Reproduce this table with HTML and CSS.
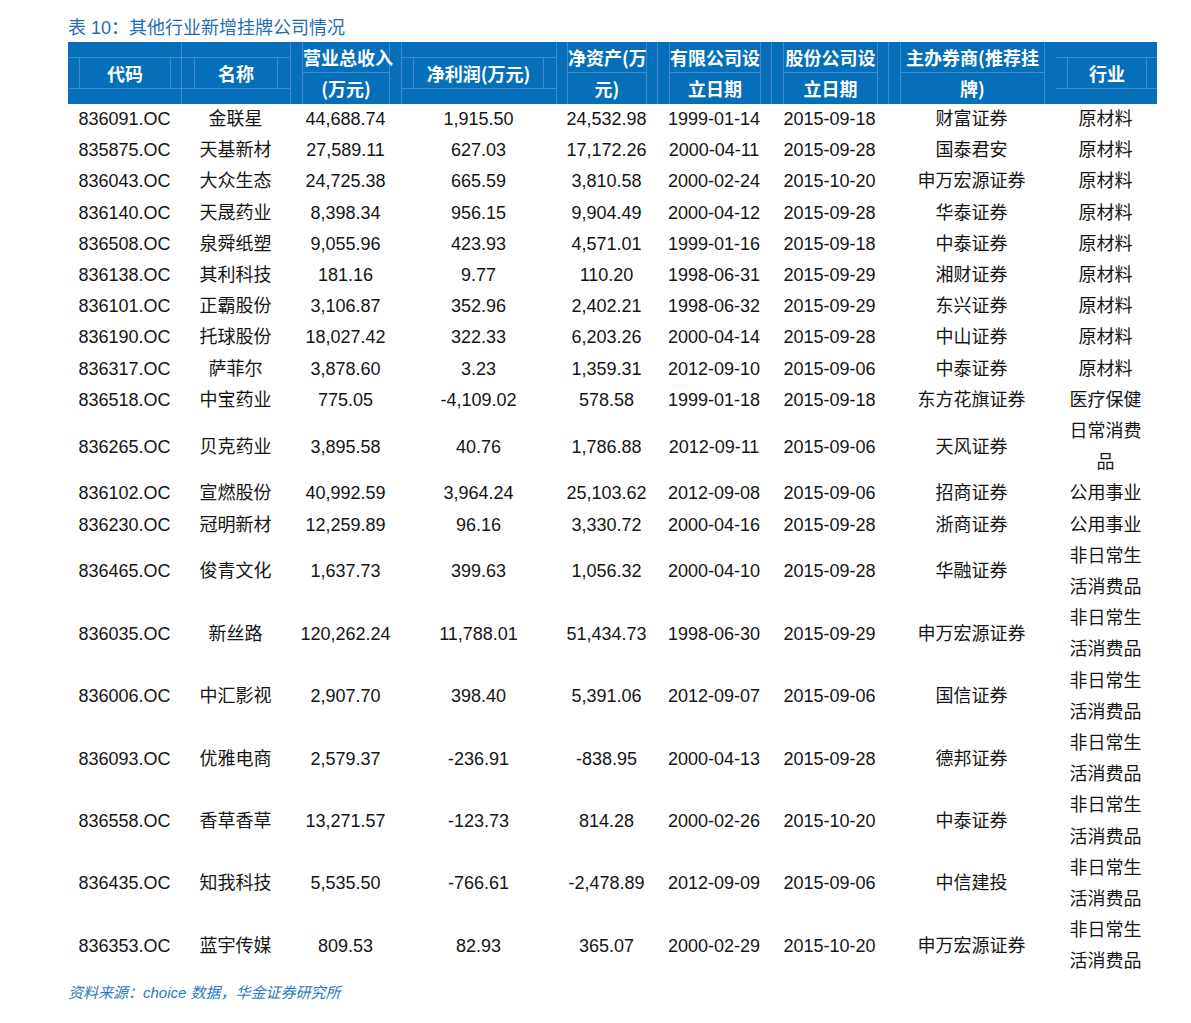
FILE: index.html
```html
<!DOCTYPE html>
<html lang="zh-CN">
<head>
<meta charset="utf-8">
<title>表 10：其他行业新增挂牌公司情况</title>
<link rel="stylesheet" href="styles.css">
</head>
<body>
<div class="page">
  <div class="title">表 10：其他行业新增挂牌公司情况</div>
  <table class="tbl">
    <colgroup>
      <col class="w-code"><col class="w-name"><col class="w-rev"><col class="w-np"><col class="w-na"><col class="w-d1"><col class="w-d2"><col class="w-br"><col class="w-ind">
    </colgroup>
    <thead>
      <tr>
        <th><div class="hc first"><div class="sbox"><div class="sin in-code">代码</div></div></div></th>
        <th><div class="hc"><div class="sbox"><div class="sin in-name">名称</div></div></div></th>
        <th><div class="hc pad-rev"><div class="tbox"><div class="l1">营业总收入</div><div class="l2">(万元)</div></div></div></th>
        <th><div class="hc"><div class="sbox"><div class="sin in-np">净利润(万元)</div></div></div></th>
        <th><div class="hc pad-na"><div class="tbox"><div class="l1">净资产(万</div><div class="l2">元)</div></div></div></th>
        <th><div class="hc pad-d"><div class="tbox"><div class="l1">有限公司设</div><div class="l2">立日期</div></div></div></th>
        <th><div class="hc pad-d"><div class="tbox"><div class="l1">股份公司设</div><div class="l2">立日期</div></div></div></th>
        <th><div class="hc pad-br"><div class="tbox"><div class="l1">主办券商(推荐挂</div><div class="l2">牌)</div></div></div></th>
        <th><div class="hc pad-br"><div class="sbox"><div class="sin in-ind">行业</div></div></div></th>
      </tr>
    </thead>
    <tbody>
      <tr><td>836091.OC</td><td>金联星</td><td>44,688.74</td><td>1,915.50</td><td>24,532.98</td><td>1999-01-14</td><td>2015-09-18</td><td class="br">财富证券</td><td class="ind">原材料</td></tr>
      <tr><td>835875.OC</td><td>天基新材</td><td>27,589.11</td><td>627.03</td><td>17,172.26</td><td>2000-04-11</td><td>2015-09-28</td><td class="br">国泰君安</td><td class="ind">原材料</td></tr>
      <tr><td>836043.OC</td><td>大众生态</td><td>24,725.38</td><td>665.59</td><td>3,810.58</td><td>2000-02-24</td><td>2015-10-20</td><td class="br">申万宏源证券</td><td class="ind">原材料</td></tr>
      <tr><td>836140.OC</td><td>天晟药业</td><td>8,398.34</td><td>956.15</td><td>9,904.49</td><td>2000-04-12</td><td>2015-09-28</td><td class="br">华泰证券</td><td class="ind">原材料</td></tr>
      <tr><td>836508.OC</td><td>泉舜纸塑</td><td>9,055.96</td><td>423.93</td><td>4,571.01</td><td>1999-01-16</td><td>2015-09-18</td><td class="br">中泰证券</td><td class="ind">原材料</td></tr>
      <tr><td>836138.OC</td><td>其利科技</td><td>181.16</td><td>9.77</td><td>110.20</td><td>1998-06-31</td><td>2015-09-29</td><td class="br">湘财证券</td><td class="ind">原材料</td></tr>
      <tr><td>836101.OC</td><td>正霸股份</td><td>3,106.87</td><td>352.96</td><td>2,402.21</td><td>1998-06-32</td><td>2015-09-29</td><td class="br">东兴证券</td><td class="ind">原材料</td></tr>
      <tr><td>836190.OC</td><td>托球股份</td><td>18,027.42</td><td>322.33</td><td>6,203.26</td><td>2000-04-14</td><td>2015-09-28</td><td class="br">中山证券</td><td class="ind">原材料</td></tr>
      <tr><td>836317.OC</td><td>萨菲尔</td><td>3,878.60</td><td>3.23</td><td>1,359.31</td><td>2012-09-10</td><td>2015-09-06</td><td class="br">中泰证券</td><td class="ind">原材料</td></tr>
      <tr><td>836518.OC</td><td>中宝药业</td><td>775.05</td><td>-4,109.02</td><td>578.58</td><td>1999-01-18</td><td>2015-09-18</td><td class="br">东方花旗证券</td><td class="ind">医疗保健</td></tr>
      <tr><td>836265.OC</td><td>贝克药业</td><td>3,895.58</td><td>40.76</td><td>1,786.88</td><td>2012-09-11</td><td>2015-09-06</td><td class="br">天风证券</td><td class="ind">日常消费品</td></tr>
      <tr><td>836102.OC</td><td>宣燃股份</td><td>40,992.59</td><td>3,964.24</td><td>25,103.62</td><td>2012-09-08</td><td>2015-09-06</td><td class="br">招商证券</td><td class="ind">公用事业</td></tr>
      <tr><td>836230.OC</td><td>冠明新材</td><td>12,259.89</td><td>96.16</td><td>3,330.72</td><td>2000-04-16</td><td>2015-09-28</td><td class="br">浙商证券</td><td class="ind">公用事业</td></tr>
      <tr><td>836465.OC</td><td>俊青文化</td><td>1,637.73</td><td>399.63</td><td>1,056.32</td><td>2000-04-10</td><td>2015-09-28</td><td class="br">华融证券</td><td class="ind">非日常生活消费品</td></tr>
      <tr><td>836035.OC</td><td>新丝路</td><td>120,262.24</td><td>11,788.01</td><td>51,434.73</td><td>1998-06-30</td><td>2015-09-29</td><td class="br">申万宏源证券</td><td class="ind">非日常生活消费品</td></tr>
      <tr><td>836006.OC</td><td>中汇影视</td><td>2,907.70</td><td>398.40</td><td>5,391.06</td><td>2012-09-07</td><td>2015-09-06</td><td class="br">国信证券</td><td class="ind">非日常生活消费品</td></tr>
      <tr><td>836093.OC</td><td>优雅电商</td><td>2,579.37</td><td>-236.91</td><td>-838.95</td><td>2000-04-13</td><td>2015-09-28</td><td class="br">德邦证券</td><td class="ind">非日常生活消费品</td></tr>
      <tr><td>836558.OC</td><td>香草香草</td><td>13,271.57</td><td>-123.73</td><td>814.28</td><td>2000-02-26</td><td>2015-10-20</td><td class="br">中泰证券</td><td class="ind">非日常生活消费品</td></tr>
      <tr><td>836435.OC</td><td>知我科技</td><td>5,535.50</td><td>-766.61</td><td>-2,478.89</td><td>2012-09-09</td><td>2015-09-06</td><td class="br">中信建投</td><td class="ind">非日常生活消费品</td></tr>
      <tr><td>836353.OC</td><td>蓝宇传媒</td><td>809.53</td><td>82.93</td><td>365.07</td><td>2000-02-29</td><td>2015-10-20</td><td class="br">申万宏源证券</td><td class="ind">非日常生活消费品</td></tr>
    </tbody>
  </table>
  <div class="source">资料来源：choice 数据，华金证券研究所</div>
</div>
</body>
</html>
```

FILE: styles.css
```css
html, body {
  margin: 0;
  padding: 0;
  background: #ffffff;
}

.page {
  padding: 16px 0 0 68px;
  font-family: "Liberation Sans", "Noto Sans CJK SC", sans-serif;
}

.title {
  font-size: 18px;
  line-height: 24px;
  height: 24px;
  color: #1f6db4;
  margin-bottom: 2px;
}

.tbl {
  border-collapse: collapse;
  border-spacing: 0;
  table-layout: fixed;
  width: 1088px;
}

.w-code { width: 113px; }
.w-name { width: 109px; }
.w-rev  { width: 111px; }
.w-np   { width: 155px; }
.w-na   { width: 101px; }
.w-d1   { width: 114px; }
.w-d2   { width: 117px; }
.w-br   { width: 156px; }
.w-ind  { width: 113px; }

/* ---------- header ---------- */
.tbl thead th {
  padding: 0;
  background: #066fba;
  color: #ffffff;
  font-family: "Noto Sans CJK SC", "Liberation Sans", sans-serif;
  font-weight: 700;
  font-size: 18px;
  vertical-align: top;
}

.hc {
  display: flow-root;
  height: 62px;
  box-sizing: border-box;
  border-left: 1px solid #3f8ccc;
}
.hc.first { border-left-color: transparent; }

.pad-rev { padding: 0 11px; }
.pad-na  { padding: 0 10px; }
.pad-d   { padding: 0 10px 0 11px; }
.pad-br  { padding: 0 0 0 11px; }

/* single-line header cell: boxed band in the middle */
.sbox {
  margin-top: 15px;
  height: 32px;
  box-sizing: border-box;
  border-top: 1px solid #3f8ccc;
  border-bottom: 1px solid #3f8ccc;
}
.sin {
  height: 100%;
  box-sizing: border-box;
  border-left: 1px solid #3f8ccc;
  border-right: 1px solid #3f8ccc;
  display: flex;
  align-items: center;
  justify-content: center;
  white-space: nowrap;
  line-height: 1;
}
.in-code { margin: 0 10px; }
.in-name { margin: 0 12px; }
.in-np   { margin: 0 12px 0 11px; }
.in-ind  { margin: 0 10px 0 11px; }

/* two-line header cell */
.tbox {
  height: 62px;
  box-sizing: border-box;
  border-left: 1px solid #3f8ccc;
  border-right: 1px solid #3f8ccc;
  display: flex;
  flex-direction: column;
}
.pad-br .tbox { border-right: none; }
.l1 {
  height: 30px;
  line-height: 30px;
  border-bottom: 1px solid #3f8ccc;
  text-align: center;
  white-space: nowrap;
}
.l2 {
  height: 31px;
  line-height: 31px;
  text-align: center;
  white-space: nowrap;
}

/* ---------- body ---------- */
.tbl tbody td {
  padding: 0;
  font-size: 18px;
  line-height: 31.2px;
  color: #151515;
  text-align: center;
  vertical-align: middle;
  white-space: nowrap;
}
.tbl tbody td.br {
  padding-left: 11px;
}
.tbl tbody td.ind {
  padding: 0 11px 0 21px;
  white-space: normal;
  word-break: break-all;
}

.source {
  margin-top: 4px;
  font-size: 15px;
  line-height: 22px;
  font-style: italic;
  color: #2a79c2;
}
```
